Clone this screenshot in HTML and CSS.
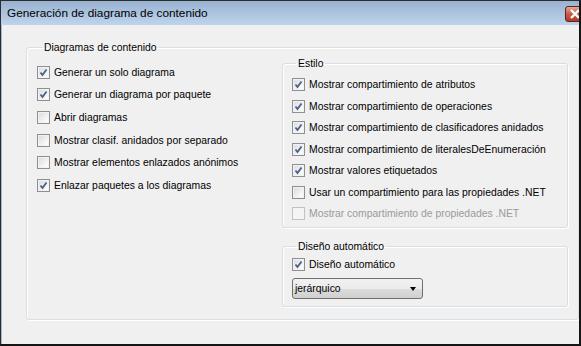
FILE: index.html
```html
<!DOCTYPE html>
<html lang="es">

<head>
    <meta charset="UTF-8">
    <title>Generación de diagrama de contenido</title>
    <link rel="stylesheet" href="styles.css">
</head>

<body>
    <div class="window">
        <div class="titlebar">
            <span class="title">Generación de diagrama de contenido</span>
            <span class="close">
                <svg width="12" height="10" viewBox="0 0 12 10"><path d="M2 1 L10 9 M10 1 L2 9" stroke="#fff" stroke-width="2.4" /></svg>
            </span>
        </div>
        <div class="content">
            <fieldset class="group outer">
                <legend>Diagramas de contenido</legend>
                <div class="col left">
                    <label class="row"><span class="box on"></span>Generar un solo diagrama</label>
                    <label class="row"><span class="box on"></span>Generar un diagrama por paquete</label>
                    <label class="row"><span class="box"></span>Abrir diagramas</label>
                    <label class="row"><span class="box"></span>Mostrar clasif. anidados por separado</label>
                    <label class="row"><span class="box"></span>Mostrar elementos enlazados anónimos</label>
                    <label class="row"><span class="box on"></span>Enlazar paquetes a los diagramas</label>
                </div>
                <div class="col right">
                    <fieldset class="group style">
                        <legend>Estilo</legend>
                        <label class="row"><span class="box on"></span>Mostrar compartimiento de atributos</label>
                        <label class="row"><span class="box on"></span>Mostrar compartimiento de operaciones</label>
                        <label class="row"><span class="box on"></span>Mostrar compartimiento de clasificadores anidados</label>
                        <label class="row"><span class="box on"></span>Mostrar compartimiento de literalesDeEnumeración</label>
                        <label class="row"><span class="box on"></span>Mostrar valores etiquetados</label>
                        <label class="row"><span class="box"></span>Usar un compartimiento para las propiedades .NET</label>
                        <label class="row disabled"><span class="box"></span>Mostrar compartimiento de propiedades .NET</label>
                    </fieldset>
                    <fieldset class="group layout">
                        <legend>Diseño automático</legend>
                        <label class="row"><span class="box on"></span>Diseño automático</label>
                        <div class="select">
                            <span>jerárquico</span>
                            <span class="arrow"></span>
                        </div>
                    </fieldset>
                </div>
            </fieldset>
        </div>
    </div>
</body>

</html>
```

FILE: styles.css
```css
* {
    margin: 0;
    padding: 0;
    box-sizing: border-box;
}

body {
    width: 581px;
    height: 346px;
    overflow: hidden;
    background: #f0f0f0;
    font: 10.4px "Liberation Sans", Arial, sans-serif;
    color: #000;
}

.window {
    width: 581px;
    height: 346px;
    display: flex;
    flex-direction: column;
    overflow: hidden;
    border-top: 1px solid #2c2c2c;
    border-left: 1px solid #2c2c2c;
    border-right: 2px solid #151515;
    border-bottom: 2px solid #151515;
}

.titlebar {
    height: 24px;
    flex-shrink: 0;
    display: flex;
    align-items: center;
    padding-left: 6px;
    background: linear-gradient(#98b2d0, #bed4ec);
    font-size: 11.8px;
}

.close {
    margin-left: auto;
    margin-right: -6px;
    margin-top: 1px;
    width: 20px;
    height: 16px;
    display: flex;
    align-items: center;
    justify-content: flex-end;
    padding-right: 3px;
    border: 1px solid #5c2525;
    border-radius: 3px;
    background: linear-gradient(#e4a99b, #c75a47 50%, #b33a26);
}

.content {
    flex: 1;
    border-left: 1px solid #a4bad4;
    padding: 16px 0 0 24px;
}

.group {
    border: 1px solid #d5dfe5;
    border-radius: 3px;
    box-shadow: inset 1px 1px 0 #fff, 1px 1px 0 #fff;
}

.group legend {
    line-height: 13px;
    padding: 0 2px;
    margin-left: 5px;
}

.outer {
    width: 553px;
    display: flex;
    padding: 3px 10px 12px 10px;
}

.col.left {
    flex: 1;
    padding-top: 4px;
}

.col.left .row {
    height: 22.6px;
}

.col.right {
    width: 286px;
}

.style {
    padding: 4px 0 2px 9px;
}

.style legend,
.layout legend {
    margin-left: 4px;
}

.layout {
    margin-top: 12px;
    padding: 1px 0 7px 9px;
}

.row {
    display: flex;
    align-items: center;
    height: 21.5px;
    gap: 4px;
    white-space: nowrap;
}

.row.disabled {
    color: #9a9a9a;
}

.box {
    width: 13px;
    height: 13px;
    flex-shrink: 0;
    border: 1px solid #8e8f8f;
    background: linear-gradient(135deg, #d8d9db, #f7f7f7 70%, #fff);
    box-shadow: inset 0 0 0 1px #f2f2f2;
}

.box.on {
    background-image: url("data:image/svg+xml,%3Csvg xmlns='http://www.w3.org/2000/svg' width='11' height='11'%3E%3Cpath d='M2.5 5.5 L4.5 8 L8.5 2.5' fill='none' stroke='%234a5f8e' stroke-width='1.8'/%3E%3C/svg%3E"), linear-gradient(135deg, #d8d9db, #f7f7f7 70%, #fff);
}

.disabled .box {
    border-color: #c2c2c2;
    background: #f4f4f4;
    box-shadow: none;
}

.select {
    width: 131px;
    height: 21px;
    margin-top: 3px;
    display: flex;
    align-items: center;
    justify-content: space-between;
    padding: 0 6px 0 2px;
    border: 1px solid #707070;
    border-radius: 3px;
    background: linear-gradient(#f2f2f2, #ebebeb 50%, #dddddd 51%, #cfcfcf);
}

.arrow {
    width: 0;
    height: 0;
    border-left: 3.5px solid transparent;
    border-right: 3.5px solid transparent;
    border-top: 4px solid #000;
}
```
